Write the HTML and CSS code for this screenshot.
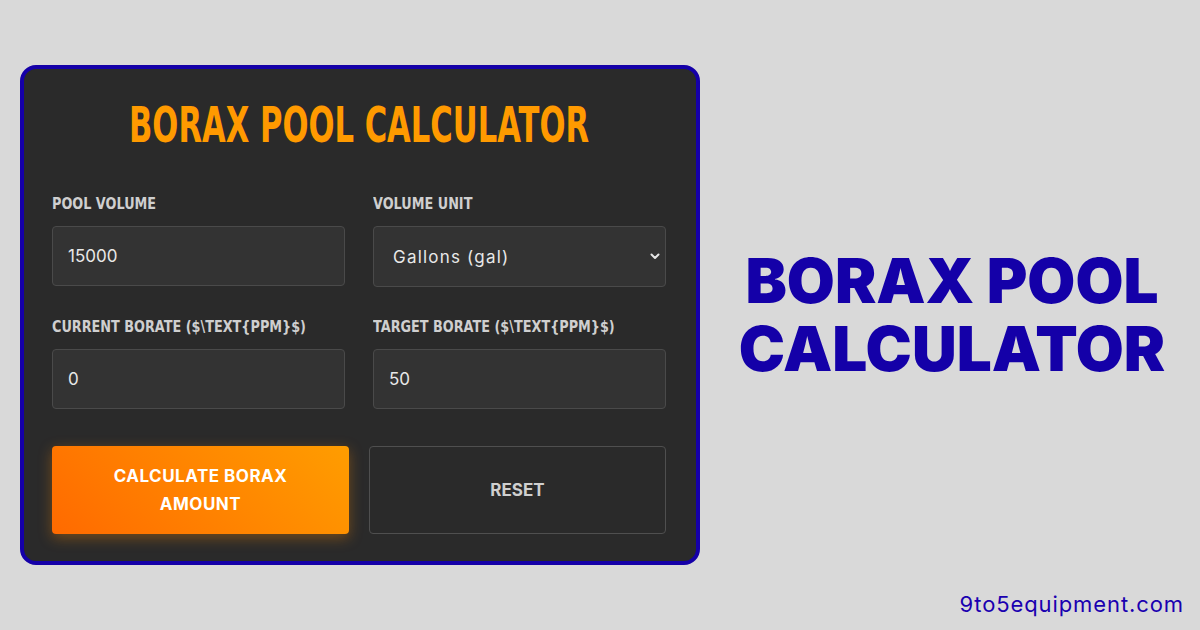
FILE: index.html
```html
<!DOCTYPE html>
<html>
<head>
<meta charset="utf-8">
<link rel="stylesheet" href="styles.css">
</head>
<body>
<div class="page">
  <div class="row">
    <div class="card">
      <h1 class="card-title"><span class="narrow">BORAX POOL CALCULATOR</span></h1>
      <div class="fields">
        <div class="field">
          <label class="label"><span class="label-text">POOL VOLUME</span></label>
          <input class="input" type="text" value="15000">
        </div>
        <div class="field">
          <label class="label"><span class="label-text">VOLUME UNIT</span></label>
          <div class="select-wrap">
            <select class="input select">
              <option>Gallons (gal)</option>
            </select>
            <svg class="chev" width="10" height="7" viewBox="0 0 10 7"><path d="M1.5 1.5 L5 5 L8.5 1.5" fill="none" stroke="#e6e6e6" stroke-width="2" stroke-linecap="round" stroke-linejoin="round"/></svg>
          </div>
        </div>
        <div class="field">
          <label class="label"><span class="label-text">CURRENT BORATE ($\TEXT{PPM}$)</span></label>
          <input class="input" type="text" value="0">
        </div>
        <div class="field">
          <label class="label"><span class="label-text">TARGET BORATE ($\TEXT{PPM}$)</span></label>
          <input class="input" type="text" value="50">
        </div>
      </div>
      <div class="buttons">
        <button class="btn btn-primary">CALCULATE BORAX<br>AMOUNT</button>
        <button class="btn btn-reset">RESET</button>
      </div>
    </div>
    <div class="hero">
      <h2 class="hero-title">BORAX POOL<br>CALCULATOR</h2>
    </div>
  </div>
  <div class="footer">9to5equipment.com</div>
</div>
</body>
</html>
```
FILE: styles.css
```css
html, body {
  margin: 0;
  padding: 0;
}
body {
  background: #d9d9d9;
  width: 1200px;
  height: 630px;
  overflow: hidden;
}
.page {
  padding: 65px 16px 0 20px;
}
.row {
  display: flex;
  align-items: center;
}
.card {
  box-sizing: border-box;
  width: 680px;
  height: 500px;
  background: #2a2a2a;
  border: 4px solid #1500a8;
  border-radius: 16px;
  padding: 27px 30px 0 28px;
}
.card-title {
  margin: 0 0 40px;
  display: flex;
  justify-content: center;
  font-family: "DejaVu Sans", sans-serif;
  font-weight: bold;
  font-size: 49px;
  line-height: 60px;
  height: 60px;
  color: #ff9a00;
  white-space: nowrap;
}
.narrow {
  display: inline-block;
  flex: none;
  transform: scaleX(0.625);
  transform-origin: center;
}
.fields {
  display: grid;
  grid-template-columns: minmax(0, 1fr) minmax(0, 1fr);
  column-gap: 28px;
  row-gap: 32px;
}
.field {
  display: flex;
  flex-direction: column;
  min-width: 0;
}
.label {
  font-family: "DejaVu Sans", sans-serif;
  font-weight: bold;
  font-size: 15px;
  line-height: 16px;
  height: 16px;
  color: #cfcfcf;
  margin-bottom: 14px;
  white-space: nowrap;
}
.label-text {
  display: inline-block;
  transform: scaleX(0.855);
  transform-origin: left center;
}
.input {
  box-sizing: border-box;
  height: 60px;
  width: 100%;
  background: #333333;
  border: 1px solid #4a4a4a;
  border-radius: 4px;
  padding: 0 15px;
  font-family: "Inter", "Noto Sans", sans-serif;
  font-size: 17px;
  color: #e8e8e8;
  outline: none;
  margin: 0;
}
.select-wrap {
  position: relative;
}
.select {
  appearance: none;
  -webkit-appearance: none;
  padding-left: 19px;
  height: 61px;
  letter-spacing: 1.2px;
}
.chev {
  position: absolute;
  right: 6px;
  top: 27px;
}
.buttons {
  display: grid;
  grid-template-columns: 297px 297px;
  column-gap: 20px;
  margin-top: 37px;
}
.btn {
  box-sizing: border-box;
  height: 88px;
  border-radius: 4px;
  font-family: "Inter", "Noto Sans", sans-serif;
  font-weight: 700;
  font-size: 17px;
  line-height: 28px;
  letter-spacing: 0.5px;
  margin: 0;
  padding: 0 10px;
  cursor: pointer;
}
.btn-primary {
  background: linear-gradient(225deg, #ff9d00 0%, #ff6a00 100%);
  border: none;
  color: #ffffff;
  box-shadow: 0 4px 14px rgba(255, 140, 0, 0.35);
}
.btn-reset {
  background: transparent;
  border: 1px solid #4f4f4f;
  color: #cfcfcf;
  letter-spacing: 0;
}
.hero {
  flex: 1;
  text-align: center;
}
.hero-title {
  margin: 0;
  font-family: "Inter", "Noto Sans", sans-serif;
  font-weight: 900;
  font-size: 62px;
  line-height: 68px;
  color: #1400a8;
  padding-left: 20px;
}
.footer {
  text-align: right;
  margin-top: 26px;
  font-family: "Inter", "Noto Sans", sans-serif;
  font-size: 22px;
  letter-spacing: 0.9px;
  color: #1a00b0;
}
```
